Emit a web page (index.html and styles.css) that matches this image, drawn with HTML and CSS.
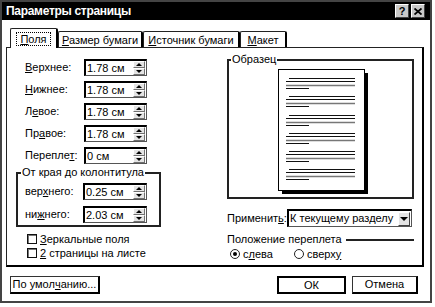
FILE: index.html
```html
<!DOCTYPE html>
<html lang="ru">
<head>
<meta charset="utf-8">
<title>Параметры страницы</title>
<link rel="stylesheet" href="styles.css">
</head>
<body>
<div class="dialog">
  <div class="titlebar">
    <span class="title">Параметры страницы</span>
    <div class="tb-buttons">
      <span class="tb-btn">?</span>
      <span class="tb-btn"><svg width="8" height="7" viewBox="0 0 8 7"><path d="M0.5 0.5L7.5 6.5M7.5 0.5L0.5 6.5" stroke="#000" stroke-width="1.8"/></svg></span>
    </div>
  </div>
  <div class="body">
    <div class="tabs">
      <div class="tab tab-fields active"><span class="focus"><u>П</u>оля</span></div>
      <div class="tab tab-size"><u>Р</u>азмер бумаги</div>
      <div class="tab tab-source"><u>И</u>сточник бумаги</div>
      <div class="tab tab-layout"><u>М</u>акет</div>
    </div>
    <div class="panel">
      <div class="left">
        <div class="fields">
          <div class="field"><span class="lbl"><u>В</u>ерхнее:</span><div class="spin"><span class="val">1.78 см</span><div class="arrows"><span class="arr"><i class="up"></i></span><span class="arr"><i class="down"></i></span></div></div></div>
          <div class="field"><span class="lbl"><u>Н</u>ижнее:</span><div class="spin"><span class="val">1.78 см</span><div class="arrows"><span class="arr"><i class="up"></i></span><span class="arr"><i class="down"></i></span></div></div></div>
          <div class="field"><span class="lbl">Л<u>е</u>вое:</span><div class="spin"><span class="val">1.78 см</span><div class="arrows"><span class="arr"><i class="up"></i></span><span class="arr"><i class="down"></i></span></div></div></div>
          <div class="field"><span class="lbl">Пр<u>а</u>вое:</span><div class="spin"><span class="val">1.78 см</span><div class="arrows"><span class="arr"><i class="up"></i></span><span class="arr"><i class="down"></i></span></div></div></div>
          <div class="field"><span class="lbl">Перепле<u>т</u>:</span><div class="spin"><span class="val">0 см</span><div class="arrows"><span class="arr"><i class="up"></i></span><span class="arr"><i class="down"></i></span></div></div></div>
        </div>
        <div class="group hf">
          <div class="legend">От края до колонтитула</div>
          <div class="field first"><span class="lbl">вер<u>х</u>него:</span><div class="spin"><span class="val">0.25 см</span><div class="arrows"><span class="arr"><i class="up"></i></span><span class="arr"><i class="down"></i></span></div></div></div>
          <div class="field second"><span class="lbl">ни<u>ж</u>него:</span><div class="spin"><span class="val">2.03 см</span><div class="arrows"><span class="arr"><i class="up"></i></span><span class="arr"><i class="down"></i></span></div></div></div>
        </div>
        <div class="checks">
          <div class="check"><span class="box"></span><span><u>З</u>еркальные поля</span></div>
          <div class="check"><span class="box"></span><span><u>2</u> страницы на листе</span></div>
        </div>
      </div>
      <div class="right">
        <div class="group sample">
          <div class="legend">Образец</div>
          <svg class="page" width="92" height="126" viewBox="0 0 92 126">
            <defs>
              <g id="para">
                <path d="M11 0.5H77M8 3.5H77M8 10.5H31" stroke="#111" stroke-width="1"/>
                <path d="M8 7.5H77" stroke="#777" stroke-width="1.3"/>
              </g>
            </defs>
            <rect x="4" y="4" width="86" height="121" fill="#000"/>
            <rect x="0.5" y="0.5" width="86" height="121" fill="#fff" stroke="#000"/>
            <use href="#para" y="9"/>
            <use href="#para" y="27"/>
            <use href="#para" y="46"/>
            <use href="#para" y="64"/>
            <use href="#para" y="82"/>
            <use href="#para" y="100"/>
          </svg>
        </div>
        <div class="apply">
          <span class="apply-lbl">Применит<u>ь</u>:</span>
          <div class="select"><span class="sel-val">К текущему разделу</span><span class="drop"><i class="down"></i></span></div>
        </div>
        <div class="gutter-head"><span>Положение переплета</span><span class="rule"></span></div>
        <div class="radios">
          <div class="radio-item first"><span class="radio checked"></span><span>с<u>л</u>ева</span></div>
          <div class="radio-item"><span class="radio"></span><span>сверх<u>у</u></span></div>
        </div>
      </div>
    </div>
    <div class="buttons">
      <div class="btn btn-defaults">По умол<u>ч</u>анию...</div>
      <div class="spacer"></div>
      <div class="btn btn-ok">ОК</div>
      <div class="btn btn-cancel">Отмена</div>
    </div>
  </div>
</div>
</body>
</html>
```

FILE: styles.css
```css
html, body {
  margin: 0;
  background: #fff;
}
body {
  font: 11px/13px "Liberation Sans", Arial, sans-serif;
  color: #000;
}
u {
  text-decoration: underline;
  text-underline-offset: 1px;
}
.dialog {
  width: 432px;
  height: 303px;
  box-sizing: border-box;
  border: 2px solid #444;
}
.titlebar {
  height: 18px;
  background: #000;
  color: #fff;
  display: flex;
  align-items: center;
  justify-content: space-between;
  padding: 0 5px 0 4px;
}
.title {
  font-weight: bold;
  font-size: 12px;
  letter-spacing: -0.3px;
}
.tb-buttons {
  display: flex;
  gap: 2px;
}
.tb-btn {
  width: 14px;
  height: 14px;
  box-sizing: border-box;
  background: #c8c8c8;
  border: 1px solid;
  border-color: #fff #404040 #404040 #fff;
  display: flex;
  align-items: center;
  justify-content: center;
  color: #000;
  font-weight: bold;
  font-size: 11px;
  line-height: 12px;
}
.body {
  padding: 8px 6px 0 4px;
}
.tabs {
  display: flex;
  align-items: flex-end;
  height: 19px;
  padding-left: 4px;
}
.tab {
  height: 16px;
  box-sizing: border-box;
  border: 1px solid #222;
  border-bottom: none;
  border-right: 2px solid #000;
  border-radius: 2px 2px 0 0;
  padding-top: 2px;
  text-align: center;
  white-space: nowrap;
}
.tab.active {
  height: 20px;
  margin-bottom: -1px;
  background: #fff;
  padding-top: 4px;
  position: relative;
  z-index: 1;
}
.focus {
  outline: 1px dotted #000;
  outline-offset: 0;
  padding: 0 3px;
}
.tab-fields { width: 48px; }
.tab-size { width: 85px; }
.tab-source { width: 97px; }
.tab-layout { width: 47px; }
.panel {
  height: 220px;
  box-sizing: border-box;
  border: 1px solid #222;
  border-right: 2px solid #000;
  border-bottom: 2px solid #000;
  display: flex;
}
.left {
  width: 145px;
  padding: 11px 0 0 9px;
}
.fields {
  display: flex;
  flex-direction: column;
  gap: 5px;
}
.field {
  display: flex;
  align-items: center;
  height: 17px;
  padding-left: 9px;
}
.lbl {
  width: 59px;
  flex: none;
}
.spin {
  width: 63px;
  height: 17px;
  box-sizing: border-box;
  border-top: 2px solid #000;
  border-left: 2px solid #000;
  border-right: 1px solid #555;
  border-bottom: 1px solid #555;
  display: flex;
  align-items: center;
}
.val {
  padding-left: 1px;
  font-size: 11px;
}
.arrows {
  margin-left: auto;
  margin-right: 1px;
  width: 12px;
  height: 14px;
  display: flex;
  flex-direction: column;
}
.arr {
  flex: 1;
  box-sizing: border-box;
  background: #e4e4e4;
  border: 1px solid;
  border-color: #fff #707070 #707070 #fff;
  display: flex;
  align-items: center;
  justify-content: center;
}
.up {
  width: 0;
  height: 0;
  border-left: 3px solid transparent;
  border-right: 3px solid transparent;
  border-bottom: 3px solid #000;
}
.down {
  width: 0;
  height: 0;
  border-left: 3px solid transparent;
  border-right: 3px solid transparent;
  border-top: 3px solid #000;
}
.group {
  box-sizing: border-box;
  border: 2px solid #222;
}
.legend {
  width: fit-content;
  background: #fff;
  padding: 0 1px;
  margin-top: -8px;
  line-height: 13px;
}
.hf {
  width: 145px;
  margin-top: 8px;
  padding: 0 0 2px 7px;
}
.hf .legend {
  margin-left: -4px;
}
.hf .field {
  padding-left: 0;
}
.hf .lbl {
  width: 58px;
}
.hf .spin {
  width: 64px;
}
.hf .field.first {
  margin-top: 4px;
}
.hf .field.second {
  margin-top: 6px;
}
.checks {
  margin-top: 5px;
  padding-left: 11px;
}
.check {
  height: 14px;
  display: flex;
  align-items: center;
  gap: 3px;
}
.box {
  width: 10px;
  height: 10px;
  box-sizing: border-box;
  border: 1px solid #111;
  box-shadow: inset 1px 1px 0 #777;
  flex: none;
}
.right {
  margin-left: 66px;
  width: 187px;
  padding-top: 11px;
}
.sample {
  height: 140px;
}
.sample .legend {
  margin-left: 2px;
}
.page {
  display: block;
  margin: 3px 0 0 49px;
}
.apply {
  display: flex;
  align-items: center;
  margin-top: 10px;
  height: 18px;
}
.apply-lbl {
  width: 60px;
  flex: none;
}
.select {
  width: 125px;
  height: 18px;
  box-sizing: border-box;
  border-top: 2px solid #000;
  border-left: 2px solid #000;
  border-right: 1px solid #555;
  border-bottom: 1px solid #555;
  display: flex;
  align-items: center;
  justify-content: space-between;
}
.sel-val {
  padding-left: 1px;
}
.drop {
  width: 12px;
  height: 14px;
  margin-right: 1px;
  box-sizing: border-box;
  background: #e4e4e4;
  border: 1px solid;
  border-color: #fff #404040 #404040 #fff;
  display: flex;
  align-items: center;
  justify-content: center;
}
.drop .down {
  border-left-width: 4px;
  border-right-width: 4px;
  border-top-width: 4px;
}
.gutter-head {
  margin-top: 6px;
  display: flex;
  align-items: center;
  gap: 4px;
}
.rule {
  flex: 1;
  border-top: 2px solid #222;
}
.radios {
  display: flex;
  margin-top: 1px;
  height: 14px;
  padding-left: 3px;
}
.radio-item {
  display: flex;
  align-items: center;
  gap: 3px;
}
.radio-item.first {
  width: 64px;
}
.radio {
  width: 10px;
  height: 10px;
  box-sizing: border-box;
  border: 1px solid #222;
  border-radius: 50%;
  display: flex;
  align-items: center;
  justify-content: center;
  flex: none;
}
.radio.checked::after {
  content: "";
  width: 4px;
  height: 4px;
  border-radius: 50%;
  background: #000;
}
.buttons {
  display: flex;
  margin-top: 9px;
  padding: 0 6px 0 4px;
}
.spacer {
  flex: 1;
}
.btn {
  height: 18px;
  box-sizing: border-box;
  border: 1px solid #333;
  border-right: 2px solid #000;
  border-bottom: 2px solid #000;
  display: flex;
  align-items: center;
  justify-content: center;
  white-space: nowrap;
}
.btn-defaults {
  width: 90px;
}
.btn-ok {
  width: 69px;
  border: 2px solid #000;
}
.btn-cancel {
  width: 66px;
  margin-left: 6px;
}
```
